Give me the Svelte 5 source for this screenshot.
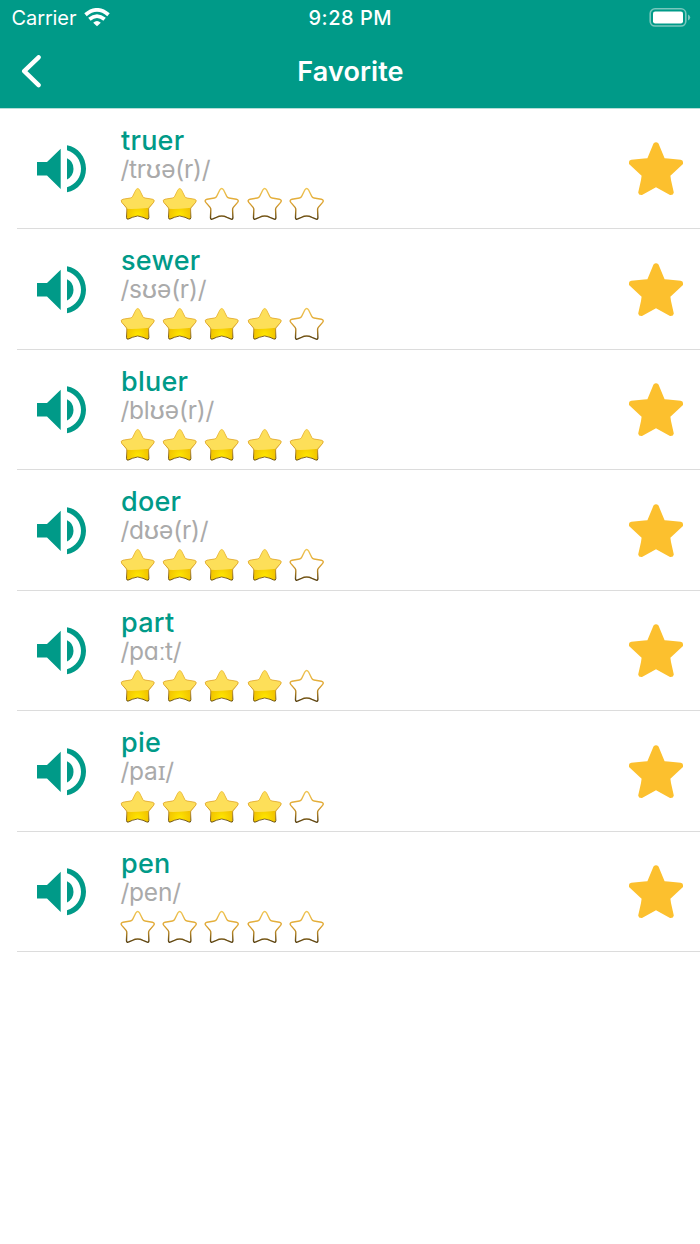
<script lang="ts">
	type Word = { text: string; ipa: string; rating: number };

	const words: Word[] = [
		{ text: "truer", ipa: "/trʊə(r)/", rating: 2 },
		{ text: "sewer", ipa: "/sʊə(r)/", rating: 4 },
		{ text: "bluer", ipa: "/blʊə(r)/", rating: 5 },
		{ text: "doer", ipa: "/dʊə(r)/", rating: 4 },
		{ text: "part", ipa: "/pɑːt/", rating: 4 },
		{ text: "pie", ipa: "/paɪ/", rating: 4 },
		{ text: "pen", ipa: "/pen/", rating: 0 },
	];

	const starPath =
		"M15.9 2.8Q17.7 .2 19.5 2.8L22.7 9.3Q23.3 10.8 25 11L32.4 12.2Q35.4 13 33.6 15.4L29.3 20.4Q28.4 21.6 28.6 23L28.9 30.6Q28.8 32.9 26.6 31.9L23 30.3Q17.7 27.6 12.4 30.3L8.8 31.9Q6.6 32.9 6.5 30.6L6.8 23Q7 21.6 6.1 20.4L1.8 15.4Q0 13 3 12.2L10.4 11Q12.1 10.8 12.7 9.3Z";
</script>

<svg class="defs" aria-hidden="true">
	<defs>
		<linearGradient id="outline" x1="0" y1="0" x2="0" y2="1">
			<stop offset="0" stop-color="#f0c654" />
			<stop offset=".5" stop-color="#dda22e" />
			<stop offset=".75" stop-color="#a57a22" />
			<stop offset="1" stop-color="#574010" />
		</linearGradient>
		<radialGradient id="gold" cx=".5" cy=".85" r=".4">
			<stop offset="0" stop-color="#ffe600" />
			<stop offset="1" stop-color="#efbd00" />
		</radialGradient>
		<clipPath id="star-clip"><path d={starPath} /></clipPath>
	</defs>
</svg>

<header>
	<div class="status">
		<div class="carrier">
			<span>Carrier</span>
			<svg width="26" height="20" viewBox="0 0 26 20" fill="none" stroke="#fff" stroke-width="3.8">
				<path d="M1.5 6.7Q13 -2.9 24.5 6.7" />
				<path d="M5.4 11.2Q13 5 20.6 11.2" />
				<path d="M9.2 14.7Q13 11.5 16.8 14.7L13 18.3Z" fill="#fff" stroke="none" />
			</svg>
		</div>
		<time>9:28 PM</time>
		<svg class="battery" width="42" height="20" viewBox="0 0 42 20">
			<rect x="1.2" y=".8" width="35.6" height="17.2" rx="4.8" fill="none" stroke="#79c7bd" stroke-width="1.6" />
			<rect x="4" y="3.4" width="30" height="12" rx="2.2" fill="#fff" />
			<path d="M39 6.5Q41.2 7.5 41.2 9.5T39 12.5Z" fill="#79c7bd" />
		</svg>
	</div>
	<nav>
		<button aria-label="Back">
			<svg width="22" height="34" viewBox="0 0 22 34" fill="none">
				<path d="M18.6 2.3L4.2 16.2L18.6 30.1" stroke="#fff" stroke-width="4.4" stroke-linecap="round" stroke-linejoin="round" />
			</svg>
		</button>
		<h1>Favorite</h1>
	</nav>
</header>

<ul>
	{#each words as word}
		<li>
			<svg class="speaker" width="50" height="48" viewBox="0 0 50 48">
				<path d="M0 17H10L23.7 3.7V44L10 30.5H0Z" />
				<path d="M30 13.3Q36.5 16.3 36.5 23.8T30 34.4Z" />
				<path d="M30 .3C41 1.8 49 12 49 23.8S41 45.8 30 47.3V42.3C39 39.5 44 32 44 23.8S39 8 30 5.2Z" />
			</svg>
			<div class="entry">
				<h2>{word.text}</h2>
				<p>{word.ipa}</p>
				<div class="rating">
					{#each { length: 5 }, i}
						<svg width="36" height="34" viewBox="0 0 36 34">
							{#if i < word.rating}
								<path d={starPath} fill="url(#gold)" />
								<path d="M0 0H36V19.5Q24 22.3 6 21.8L0 20Z" fill="#fddf59" clip-path="url(#star-clip)" />
							{/if}
							<path d={starPath} fill="none" stroke="url(#outline)" stroke-width={i < word.rating ? 0.9 : 1.4} />
						</svg>
					{/each}
				</div>
			</div>
			<svg class="favorite" width="56" height="54" viewBox="0 0 56 54">
				<path d="M25.5 1.6Q28 -1 30.5 1.6L36.6 16.3L40 16.4L52.6 17.7Q55 18 55 20V22L42.4 33.8L43 38L45.8 50.5Q45.4 53.4 42 53L28 45.3L14 53Q10.6 53.4 10.2 50.5L13 38L13.6 33.8L1 22V20Q1 18 3.4 17.7L16 16.4L19.4 16.3Z" />
			</svg>
		</li>
	{/each}
</ul>

<style>
	:global(body) {
		background: #fff;
		font-family: Inter, "Noto Sans", sans-serif;
	}
	.defs {
		position: absolute;
		width: 0;
		height: 0;
	}
	header {
		height: 108px;
		border-bottom: 1px solid #b5ddd8;
		background: #009a88;
		color: #fff;
	}
	.status {
		display: grid;
		grid-template-columns: 1fr auto 1fr;
		align-items: center;
		height: 35px;
		padding: 0 9px 0 11.5px;
	}
	.carrier {
		display: flex;
		align-items: center;
		gap: 7.5px;
		font-size: 20px;
		letter-spacing: -0.1px;
	}
	time {
		margin-right: 2px;
		font-size: 20px;
		font-weight: 500;
		letter-spacing: 0.5px;
	}
	.battery {
		justify-self: end;
	}
	nav {
		display: grid;
		grid-template-columns: 100px 1fr 100px;
		align-items: center;
		height: 73px;
	}
	button {
		display: flex;
		padding: 0 0 0 20px;
		border: 0;
		background: none;
	}
	h1 {
		margin: 0 0 0 1px;
		font-size: 27px;
		font-weight: 600;
		letter-spacing: 0.1px;
		text-align: center;
	}
	ul {
		margin: -0.55px 0 0;
		padding: 0;
		list-style: none;
	}
	li {
		display: flex;
		box-sizing: border-box;
		height: 120.55px;
		margin-left: 17px;
		padding: 16.25px 16px 0 20px;
		border-bottom: 1px solid #dcdcdc;
	}
	.speaker {
		margin-top: 20.3px;
		fill: #009a88;
	}
	.entry {
		flex: 1;
		margin-left: 34px;
	}
	h2 {
		margin: 0;
		color: #009a88;
		font-size: 27px;
		font-weight: 500;
		letter-spacing: 0.25px;
		line-height: 32px;
	}
	p {
		margin: 0 0 0 -0.6px;
		color: #aaa;
		font-size: 24.5px;
		letter-spacing: -0.2px;
		line-height: 24px;
	}
	.rating {
		display: flex;
		gap: 6.25px;
		margin: 6.1px 0 0 -1.1px;
	}
	.favorite {
		margin-top: 17.3px;
		fill: #fcc02e;
	}
</style>
